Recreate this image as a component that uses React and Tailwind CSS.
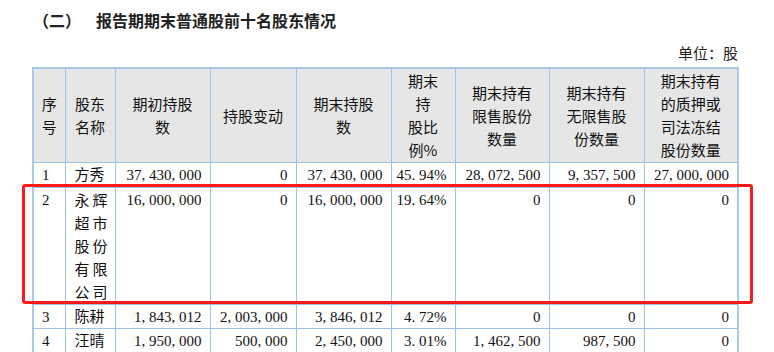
import React from "react";

const CJK = { fontFamily: '"Noto Sans CJK SC", "Noto Sans", sans-serif' };

const COLS = [32, 50, 95, 86, 95, 64, 94, 95, 94];

const HEAD = [
  ["序", "号"],
  ["股东", "名称"],
  ["期初持股", "数"],
  ["持股变动"],
  ["期末持股", "数"],
  ["期末", "持", "股比", "例%"],
  ["期末持有", "限售股份", "数量"],
  ["期末持有", "无限售股", "份数量"],
  ["期末持有", "的质押或", "司法冻结", "股份数量"],
];

const ROWS = [
  { h: 25, no: "1", name: ["方秀"], v: ["37,430,000", "0", "37,430,000", "45.94%", "28,072,500", "9,357,500", "27,000,000"] },
  { h: 117, no: "2", name: ["永辉", "超市", "股份", "有限", "公司"], v: ["16,000,000", "0", "16,000,000", "19.64%", "0", "0", "0"] },
  { h: 24, no: "3", name: ["陈耕"], v: ["1,843,012", "2,003,000", "3,846,012", "4.72%", "0", "0", "0"] },
  { h: 24, no: "4", name: ["汪晴"], v: ["1,950,000", "500,000", "2,450,000", "3.01%", "1,462,500", "987,500", "0"] },
];

function Num({ text }) {
  return (
    <span className="font-['Liberation_Serif',serif] text-[15px] text-[#111]">
      {text.split("").map((c, i) =>
        c === "," || c === "." ? (
          <span key={i} className="inline-block w-[7.5px] text-left">{c}</span>
        ) : (
          <span key={i}>{c}</span>
        )
      )}
    </span>
  );
}

export default function App() {
  return (
    <div className="relative w-[774px] h-[352px] overflow-hidden bg-white" style={CJK}>
      <div className="flex items-center h-[40px] pl-[33px] text-[16px] font-semibold text-[#222]">
        <span className="w-[63px]">（二）</span>
        <span>报告期期末普通股前十名股东情况</span>
      </div>
      <div className="flex justify-end w-[738px] h-[27px] items-center text-[15px] text-[#222]">单位：股</div>
      <table className="ml-[32px] border-collapse border-2 border-[#a9c9ea] text-[15px] text-[#111] table-fixed">
        <colgroup>
          {COLS.map((w, i) => (
            <col key={i} style={{ width: w }} />
          ))}
        </colgroup>
        <thead>
          <tr className="h-[94px] bg-[#e6e6e6]">
            {HEAD.map((lines, i) => (
              <th key={i} className="border border-[#9dc3e6] font-normal text-center align-middle p-0 leading-[23px]">
                {lines.map((l, j) => (
                  <div key={j}>{l}</div>
                ))}
              </th>
            ))}
          </tr>
        </thead>
        <tbody>
          {ROWS.map((r) => (
            <tr key={r.no} style={{ height: r.h }}>
              <td className="border border-[#9dc3e6] align-top pl-[8px] p-0 leading-[22px]">
                <Num text={r.no} />
              </td>
              <td className="border border-[#9dc3e6] align-top pl-[9px] p-0 leading-[22px]">
                {r.name.map((l, j) => (
                  <div key={j} className={r.name.length > 1 ? "tracking-[3px] leading-[23px]" : ""}>{l}</div>
                ))}
              </td>
              {r.v.map((v, j) => (
                <td key={j} className="border border-[#9dc3e6] align-top text-right pr-[8px] p-0 leading-[22px]">
                  <Num text={v} />
                </td>
              ))}
            </tr>
          ))}
        </tbody>
      </table>
      <div className="absolute left-[22px] top-[184px] w-[731px] h-[120px] border-[3px] border-[#ff1a1a] rounded-[3px]" />
    </div>
  );
}
